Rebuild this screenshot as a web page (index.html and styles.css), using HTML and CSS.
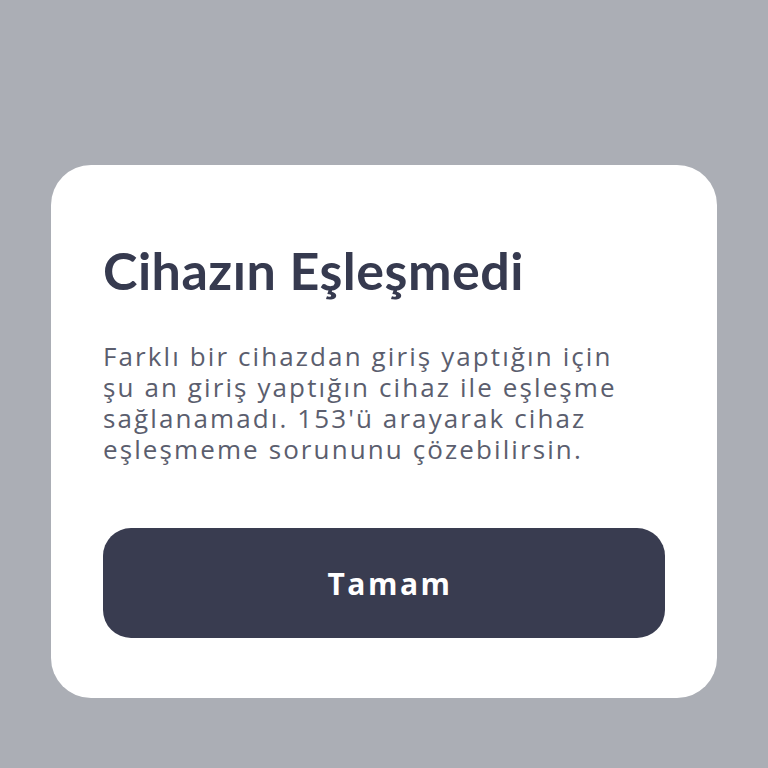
FILE: index.html
```html
<!DOCTYPE html>
<html lang="tr">
<head>
  <meta charset="UTF-8" />
  <meta name="viewport" content="width=device-width, initial-scale=1.0"/>
  <title>Cihazın Eşleşmedi</title>
  <link rel="stylesheet" href="styles.css">
</head>
<body>
  <div class="dialog">
    <h1>Cihazın Eşleşmedi</h1>
    <p>Farklı bir cihazdan giriş yaptığın için şu an giriş yaptığın cihaz ile eşleşme sağlanamadı. 153'ü arayarak cihaz eşleşmeme sorununu çözebilirsin.</p>
    <button class="button">Tamam</button>
  </div>
</body>
</html>
```

FILE: styles.css
```css
* {
  margin: 0;
  padding: 0;
  box-sizing: border-box;
}

body {
  font-family: 'Open Sans', 'Noto Sans', sans-serif;
  background-color: #abaeb5;
  width: 768px;
  height: 768px;
  padding-top: 165px;
  padding-left: 51px;
}

.dialog {
  width: 666px;
  background-color: #fff;
  border-radius: 40px;
  padding: 75px 52px 60px 52px;
}

.dialog h1 {
  font-family: 'Lato', sans-serif;
  font-size: 52px;
  font-weight: 700;
  color: #363a4f;
  line-height: 60px;
  letter-spacing: 0.5px;
  margin-bottom: 41px;
}

.dialog p {
  font-size: 26px;
  color: #5b5e6e;
  line-height: 31px;
  letter-spacing: 2.1px;
  width: 535px;
  margin-bottom: 63px;
}

.button {
  display: block;
  width: 100%;
  height: 110px;
  border: none;
  border-radius: 28px;
  background-color: #393c50;
  color: #fff;
  font-family: inherit;
  font-size: 30px;
  font-weight: 700;
  letter-spacing: 2.5px;
  padding-left: 12px;
}
```
